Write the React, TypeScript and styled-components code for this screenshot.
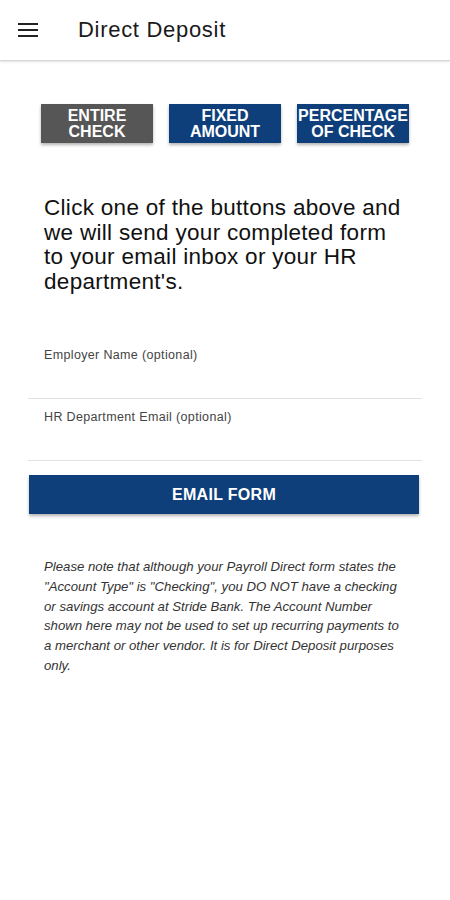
import React from 'react';
import styled, { createGlobalStyle } from 'styled-components';

const GlobalStyle = createGlobalStyle`
  body {
    margin: 0;
    background: #ffffff;
    font-family: "Liberation Sans", Arial, sans-serif;
  }
`;

const Page = styled.div`
  width: 450px;
  min-height: 900px;
  background: #ffffff;
`;

const Header = styled.header`
  height: 60px;
  display: flex;
  align-items: center;
  border-bottom: 1px solid #d6d6d6;
  box-shadow: 0 1px 2px rgba(0, 0, 0, 0.12);
`;

const MenuButton = styled.button`
  width: 58px;
  height: 60px;
  padding: 0 0 0 18px;
  border: none;
  background: none;
  display: flex;
  align-items: center;
  cursor: pointer;
`;

const Title = styled.h1`
  margin: 0 0 0 20px;
  font-size: 22px;
  font-weight: normal;
  color: #1a1a1a;
  letter-spacing: 0.7px;
`;

const Content = styled.main`
  padding: 43px 28px 0 28px;
`;

const ButtonRow = styled.div`
  display: flex;
  gap: 16px;
  padding: 0 13px;
`;

const TypeButton = styled.button<{ $active?: boolean }>`
  width: 112px;
  height: 39px;
  border: none;
  padding: 0;
  background: ${p => (p.$active ? '#565656' : '#0e3f7b')};
  color: #ffffff;
  font-family: "Liberation Sans", Arial, sans-serif;
  font-size: 16px;
  font-weight: bold;
  line-height: 15.5px;
  text-transform: uppercase;
  white-space: nowrap;
  box-shadow: 0 2px 3px rgba(0, 0, 0, 0.3);
  cursor: pointer;
  display: flex;
  align-items: center;
  justify-content: center;
  text-align: center;
  overflow: visible;
`;

const Intro = styled.p`
  margin: 53px 0 0 0;
  padding: 0 16px;
  font-size: 22.5px;
  line-height: 24.5px;
  letter-spacing: 0.3px;
  color: #111111;
`;

const Field = styled.label`
  display: block;
  height: 61px;
  padding: 0 0 0 16px;
  border-bottom: 1px solid #e2e2e2;
`;

const FirstField = styled(Field)`
  margin-top: 43px;
`;

const FieldLabel = styled.span`
  display: block;
  padding-top: 11px;
  font-size: 12.5px;
  line-height: 14px;
  letter-spacing: 0.35px;
  color: #444444;
`;

const FieldInput = styled.input`
  display: block;
  width: 100%;
  border: none;
  outline: none;
  background: transparent;
  height: 30px;
  padding: 0;
  font-size: 14px;
  font-family: "Liberation Sans", Arial, sans-serif;
`;

const SubmitButton = styled.button`
  display: block;
  width: 390px;
  height: 39px;
  margin: 14px 0 0 1px;
  border: none;
  background: #0e3f7b;
  color: #ffffff;
  font-family: "Liberation Sans", Arial, sans-serif;
  font-size: 16px;
  font-weight: bold;
  letter-spacing: 0.3px;
  box-shadow: 0 2px 3px rgba(0, 0, 0, 0.3);
  cursor: pointer;
`;

const Note = styled.p`
  margin: 43px 0 0 0;
  padding: 0 16px 0 16px;
  font-size: 13.2px;
  line-height: 19.8px;
  font-style: italic;
  color: #333333;
`;

const MenuIcon = () => (
  <svg width="20" height="14" viewBox="0 0 20 14">
    <rect x="0" y="0" width="20" height="2" fill="#222" />
    <rect x="0" y="6" width="20" height="2" fill="#222" />
    <rect x="0" y="12" width="20" height="2" fill="#222" />
  </svg>
);

const buttons = [
  { key: 'entire', lines: ['Entire', 'Check'], active: true },
  { key: 'fixed', lines: ['Fixed', 'Amount'], active: false },
  { key: 'percent', lines: ['Percentage', 'of Check'], active: false },
];

export default function App() {
  return (
    <Page>
      <GlobalStyle />
      <Header>
        <MenuButton aria-label="menu">
          <MenuIcon />
        </MenuButton>
        <Title>Direct Deposit</Title>
      </Header>
      <Content>
        <ButtonRow>
          {buttons.map(b => (
            <TypeButton key={b.key} $active={b.active}>
              {b.lines[0]}
              <br />
              {b.lines[1]}
            </TypeButton>
          ))}
        </ButtonRow>
        <Intro>
          Click one of the buttons above and we will send your completed form to your email inbox or your HR
          department's.
        </Intro>
        <FirstField>
          <FieldLabel>Employer Name (optional)</FieldLabel>
          <FieldInput />
        </FirstField>
        <Field>
          <FieldLabel>HR Department Email (optional)</FieldLabel>
          <FieldInput />
        </Field>
        <SubmitButton>EMAIL FORM</SubmitButton>
        <Note>
          Please note that although your Payroll Direct form states the "Account Type" is "Checking", you DO NOT
          have a checking or savings account at Stride Bank. The Account Number shown here may not be used to set up
          recurring payments to a merchant or other vendor. It is for Direct Deposit purposes only.
        </Note>
      </Content>
    </Page>
  );
}
